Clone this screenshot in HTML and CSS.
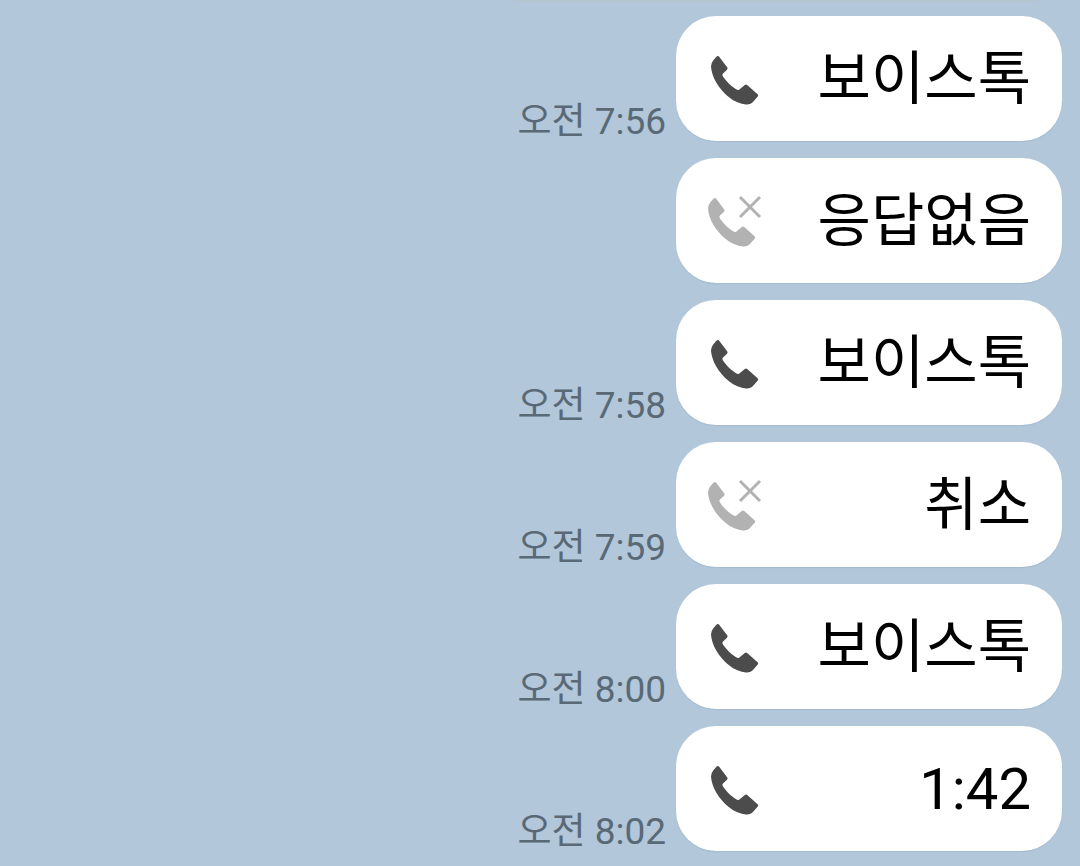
FILE: index.html
```html
<!DOCTYPE html>
<html lang="ko">
<head>
<meta charset="utf-8">
<meta name="viewport" content="width=device-width, initial-scale=1">
<title>보이스톡</title>
<link rel="stylesheet" href="styles.css">
</head>
<body>
<svg class="sprite" aria-hidden="true">
  <symbol id="phone" viewBox="0 1 60 60">
    <path d="M12.6 7.6Q14.2 6.4 15.4 8L23.3 18.6Q24 19.7 23 20.7L19 24.4Q18 25.4 18.6 26.8C21.5 31.8 27.5 37.6 32.6 40.6Q34.2 41.3 35.4 40.4L40.8 36Q42 35 43.2 36L53.6 45.2Q54.8 46.3 53.8 47.5L49.6 52.2Q46.5 55.8 42 55.4C36.5 55 30.5 52.5 25 48.2C14.5 40 7.5 27.5 7 17.5Q7 14 9.2 11.4Z"/>
  </symbol>
  <symbol id="missed" viewBox="0 0 60 60">
    <use href="#phone" x="-3" y="0" width="60" height="60"/>
    <path class="cross" d="M36 5L56 25M56 5L36 25"/>
  </symbol>
</svg>
<div class="edge"></div>
<main class="chat">
  <div class="message"><time class="time">오전 7:56</time><div class="bubble"><svg class="icon"><use href="#phone"/></svg><span>보이스톡</span></div></div>
  <div class="message"><div class="bubble"><svg class="icon muted"><use href="#missed"/></svg><span>응답없음</span></div></div>
  <div class="message"><time class="time">오전 7:58</time><div class="bubble"><svg class="icon"><use href="#phone"/></svg><span>보이스톡</span></div></div>
  <div class="message"><time class="time">오전 7:59</time><div class="bubble"><svg class="icon muted"><use href="#missed"/></svg><span>취소</span></div></div>
  <div class="message"><time class="time">오전 8:00</time><div class="bubble"><svg class="icon"><use href="#phone"/></svg><span>보이스톡</span></div></div>
  <div class="message"><time class="time">오전 8:02</time><div class="bubble"><svg class="icon"><use href="#phone"/></svg><span>1:42</span></div></div>
</main>
</body>
</html>
```
FILE: styles.css
```css
* { box-sizing: border-box; }
body {
  margin: 0;
  background: #b2c7da;
  font-family: Roboto, "Noto Sans CJK KR", sans-serif;
}
.sprite { position: absolute; width: 0; height: 0; }
.edge {
  width: 520px;
  height: 2px;
  margin: 0 44px 0 auto;
  background: #b3c6cf;
}
.chat {
  display: flex;
  flex-direction: column;
  gap: 17px;
  padding: 14px 18px;
}
.message {
  display: flex;
  justify-content: flex-end;
  align-items: flex-end;
  gap: 10px;
}
.time {
  color: #596975;
  font-size: 37px;
  line-height: 38px;
}
.bubble {
  display: flex;
  align-items: center;
  justify-content: space-between;
  width: 386px;
  padding: 20px 31px 18px 28px;
  border-radius: 40px;
  background: #fff;
  box-shadow: 0 1px 1px rgba(90, 115, 140, 0.15);
  color: #000;
  font-size: 58px;
  line-height: 87px;
}
.icon { width: 60px; height: 60px; fill: #4c4c4c; }
.muted { fill: #b2b2b2; }
.cross { fill: none; stroke: #b2b2b2; stroke-width: 3; }
```
